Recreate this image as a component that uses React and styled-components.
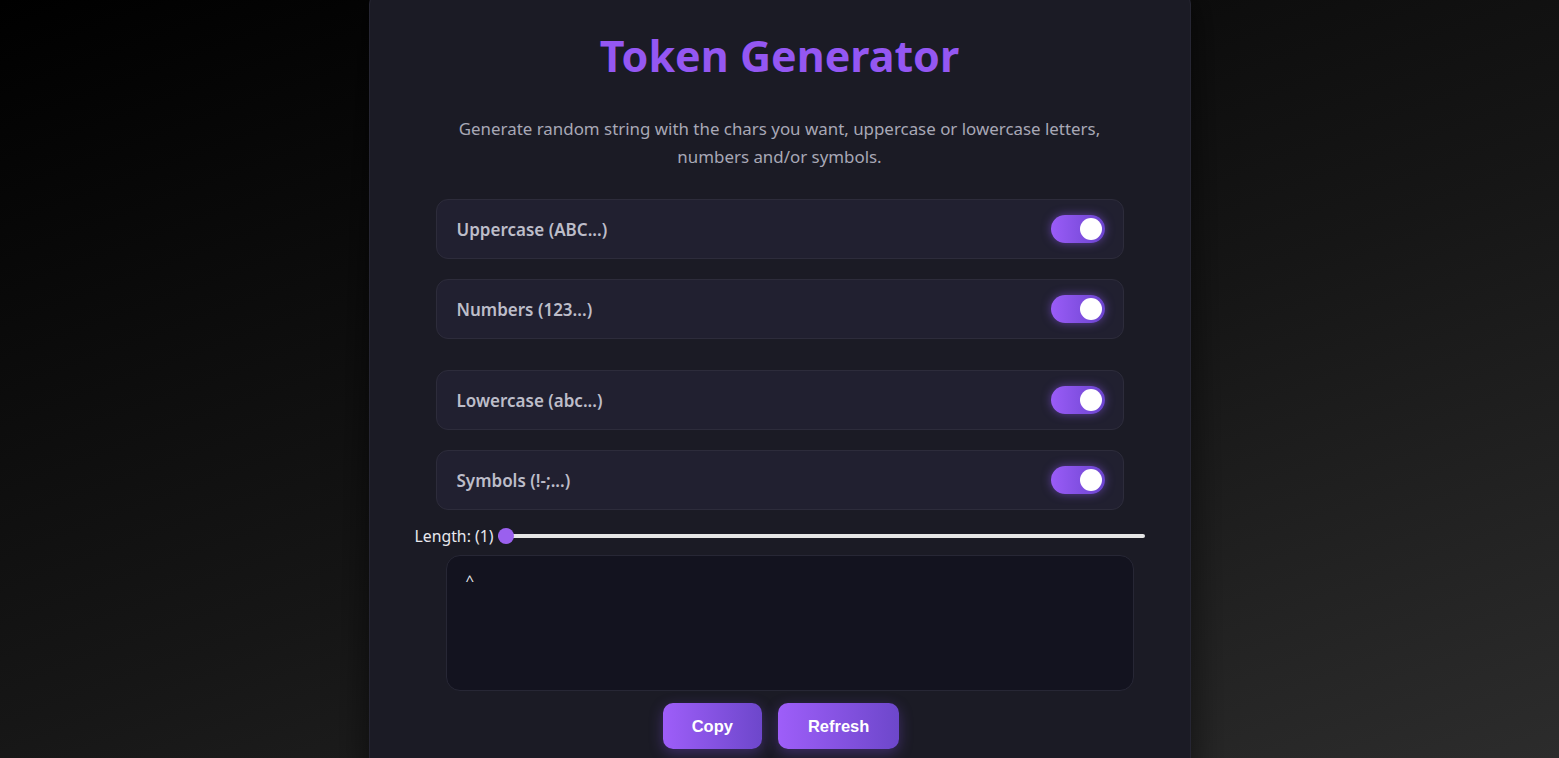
import styled, { createGlobalStyle } from "styled-components";
import { useState } from "react";

const GlobalStyle = createGlobalStyle`
  html, body {
    margin: 0;
    height: 100%;
  }
  body {
    background: linear-gradient(160deg, #000000 0%, #161616 55%, #2c2c2c 100%);
    font-family: "Noto Sans", "Open Sans", sans-serif;
    overflow: hidden;
  }
`;

const Page = styled.div`
  display: flex;
  justify-content: center;
  min-height: 758px;
`;

const Card = styled.div`
  width: 822px;
  margin-top: -12px;
  padding: 38px 66px 40px;
  box-sizing: border-box;
  background: #1b1b25;
  border: 1px solid #262633;
  border-radius: 16px;
  box-shadow: 0 0 40px rgba(0, 0, 0, 0.6);
  display: flex;
  flex-direction: column;
  align-items: center;
`;

const Title = styled.h1`
  margin: 0;
  font-size: 43px;
  font-weight: 700;
  color: #9457f2;
  line-height: 58px;
`;

const Description = styled.p`
  margin: 30px 0 28px;
  max-width: 670px;
  text-align: center;
  font-size: 16.9px;
  line-height: 28px;
  color: #a8a8b6;
`;

const Group = styled.div`
  width: 100%;
  display: flex;
  flex-direction: column;
  gap: 20px;
  margin-bottom: ${(p) => p.$gap || 0}px;
`;

const OptionRow = styled.div`
  height: 60px;
  padding: 0 18px 0 20px;
  box-sizing: border-box;
  display: flex;
  align-items: center;
  justify-content: space-between;
  background: #212030;
  border: 1px solid #2d2c3b;
  border-radius: 12px;
`;

const OptionLabel = styled.span`
  font-size: 17px;
  font-weight: 600;
  color: #bdbdc9;
`;

const Switch = styled.button`
  width: 54px;
  height: 28px;
  padding: 3px;
  border: none;
  border-radius: 14px;
  cursor: pointer;
  display: flex;
  align-items: center;
  justify-content: ${(p) => (p.$on ? "flex-end" : "flex-start")};
  background: ${(p) =>
    p.$on ? "linear-gradient(90deg, #9a5cf7, #6b44cf)" : "#3a3947"};
  box-shadow: ${(p) => (p.$on ? "0 0 10px rgba(140, 90, 240, 0.55)" : "none")};
  box-sizing: border-box;
`;

const Knob = styled.span`
  width: 22px;
  height: 22px;
  border-radius: 50%;
  background: #ffffff;
`;

const LengthRow = styled.div`
  width: 730px;
  display: flex;
  align-items: center;
  gap: 4px;
  margin-top: 15px;
`;

const LengthLabel = styled.label`
  font-size: 15.8px;
  color: #e8e8ee;
  white-space: nowrap;
`;

const Range = styled.input`
  flex: 1;
  margin: 0;
  height: 16px;
  appearance: none;
  background: transparent;
  &::-webkit-slider-runnable-track {
    height: 4px;
    background: #e6e6e6;
    border-radius: 2px;
  }
  &::-webkit-slider-thumb {
    appearance: none;
    width: 16px;
    height: 16px;
    border-radius: 50%;
    background: #9a60ee;
    margin-top: -6px;
  }
`;

const Output = styled.div`
  width: 688px;
  height: 136px;
  margin: 8px 0 0 20px;
  padding: 14px 19px;
  box-sizing: border-box;
  background: #13131f;
  border: 1px solid #272735;
  border-radius: 14px;
  color: #e8e8ee;
  font-size: 15px;
`;

const Actions = styled.div`
  display: flex;
  gap: 16px;
  margin: 12px 0 0 3px;
`;

const Button = styled.button`
  height: 46px;
  padding: 0 ${(p) => p.$pad}px;
  border: none;
  border-radius: 10px;
  cursor: pointer;
  font-family: "Liberation Sans", Arial, sans-serif;
  font-size: 16.5px;
  font-weight: 700;
  color: #ffffff;
  background: linear-gradient(90deg, #9e5ef9, #6d47cb);
  box-shadow: 0 4px 14px rgba(130, 80, 230, 0.35);
`;

const groups = [
  [
    { key: "upper", label: "Uppercase (ABC...)" },
    { key: "numbers", label: "Numbers (123...)" },
  ],
  [
    { key: "lower", label: "Lowercase (abc...)" },
    { key: "symbols", label: "Symbols (!-;...)" },
  ],
];

const App = () => {
  const [opts, setOpts] = useState({
    upper: true,
    numbers: true,
    lower: true,
    symbols: true,
  });
  const [length, setLength] = useState(1);
  const toggle = (key) => setOpts({ ...opts, [key]: !opts[key] });

  return (
    <Page>
      <GlobalStyle />
      <Card>
        <Title>Token Generator</Title>
        <Description>
          Generate random string with the chars you want, uppercase or
          lowercase letters, numbers and/or symbols.
        </Description>
        {groups.map((group, i) => (
          <Group key={i} $gap={i === 0 ? 31 : 0}>
            {group.map((item) => (
              <OptionRow key={item.key}>
                <OptionLabel>{item.label}</OptionLabel>
                <Switch $on={opts[item.key]} onClick={() => toggle(item.key)}>
                  <Knob />
                </Switch>
              </OptionRow>
            ))}
          </Group>
        ))}
        <LengthRow>
          <LengthLabel>Length: ({length})</LengthLabel>
          <Range
            type="range"
            min="1"
            max="512"
            value={length}
            onChange={(e) => setLength(Number(e.target.value))}
          />
        </LengthRow>
        <Output>^</Output>
        <Actions>
          <Button $pad={29}>Copy</Button>
          <Button $pad={30}>Refresh</Button>
        </Actions>
      </Card>
    </Page>
  );
};

export default App;
